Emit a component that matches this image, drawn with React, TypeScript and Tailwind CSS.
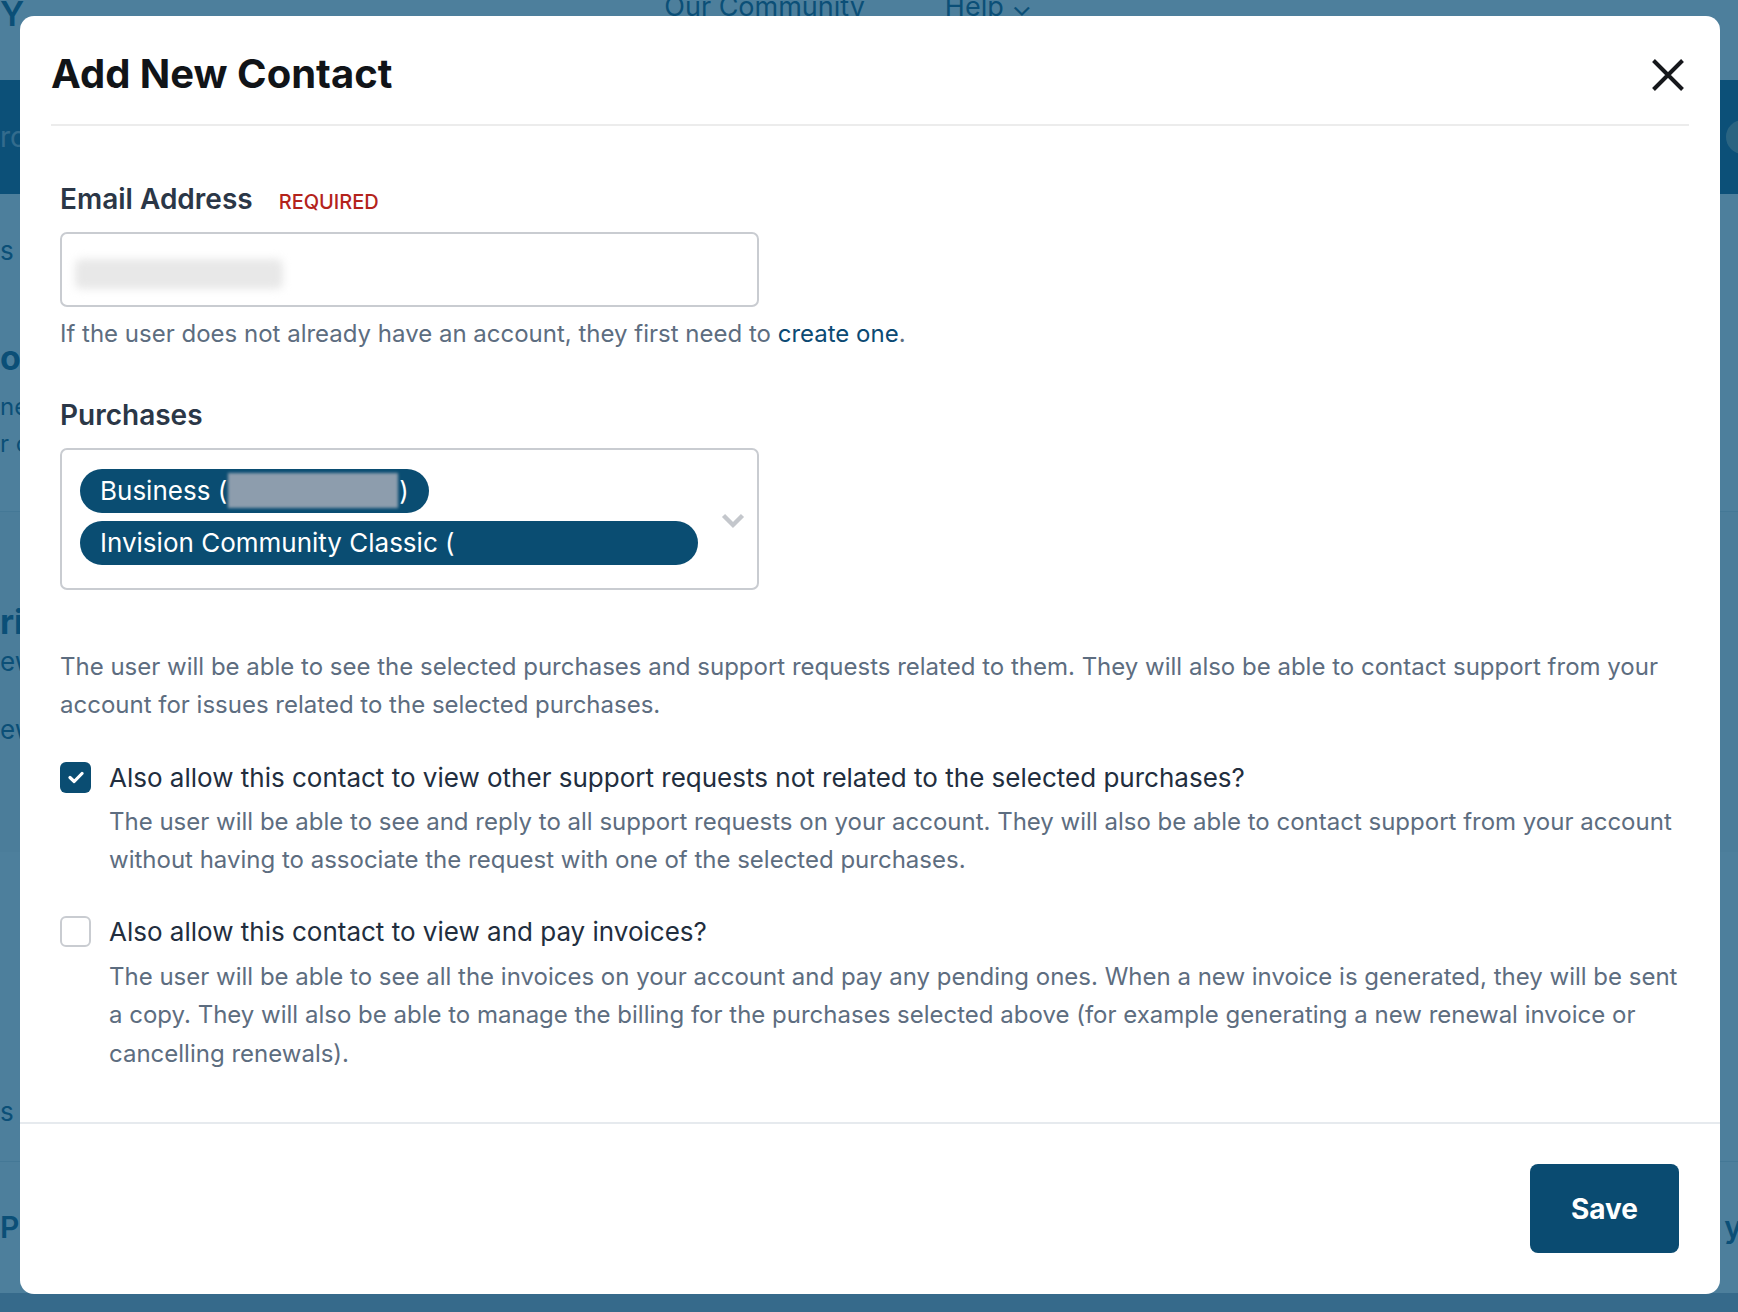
import React from "react";

function CloseIcon() {
  return (
    <svg width="34" height="34" viewBox="0 0 34 34" fill="none" aria-hidden="true">
      <path d="M2.5 2.5L31.5 31.5M31.5 2.5L2.5 31.5" stroke="#16181c" strokeWidth="4" strokeLinecap="butt" />
    </svg>
  );
}

function ChevronDown() {
  return (
    <svg width="24" height="17" viewBox="0 0 24 17" fill="none" aria-hidden="true">
      <path d="M2.5 3.5L12 13L21.5 3.5" stroke="#c4c7cc" strokeWidth="4.4" />
    </svg>
  );
}

function CheckIcon() {
  return (
    <svg width="16" height="13" viewBox="0 0 16 13" fill="none" aria-hidden="true">
      <path d="M2 6.5L6.2 10.5L14 2.5" stroke="#ffffff" strokeWidth="3.2" strokeLinecap="round" strokeLinejoin="round" />
    </svg>
  );
}

function Backdrop() {
  return (
    <div className="flex flex-col">
      {/* top navigation */}
      <div className="flex h-[80px] items-start bg-white">
        <span className="-mt-[6px] text-[34px] font-semibold leading-[40px] text-[#0b4f77]">Y</span>
        <nav className="-mt-[10px] ml-[640px] flex gap-[80px] text-[27px] leading-[34px] text-[#0b4f77]">
          <span>Our Community</span>
          <span>Help ⌄</span>
        </nav>
      </div>
      {/* hero band */}
      <div className="flex h-[114px] items-center justify-between bg-[#12527b]">
        <span className="text-[28px] leading-[34px] text-white/60">ro</span>
        <span className="mr-[-22px] h-[34px] w-[34px] rounded-full bg-[#7f9a9c]" />
      </div>
      {/* page content */}
      <div className="flex flex-col text-[#0b4f77]">
        <div className="h-[118px] pt-[42px] text-[26px] leading-[30px]">s</div>
        <div className="h-[200px] border-b border-[#dfe5ea] pt-[26px]">
          <div className="text-[34px] font-bold leading-[40px]">ou</div>
          <div className="mt-[10px] text-[24px] leading-[38px]">ne</div>
          <div className="text-[24px] leading-[36px]">r c</div>
        </div>
        <div className="h-[340px] bg-[#f6f7f8] pt-[90px]">
          <div className="text-[34px] font-bold leading-[40px]">ric</div>
          <div className="text-[26px] leading-[40px]">ew</div>
          <div className="mt-[28px] text-[26px] leading-[40px]">ew</div>
        </div>
        <div className="h-[310px] border-b border-[#dfe5ea] pt-[245px] text-[26px] leading-[30px]">s</div>
        <div className="flex h-[131px] items-center justify-between">
          <span className="text-[30px] font-semibold">PS</span>
          <span className="mr-[-4px] text-[30px] font-semibold">y</span>
        </div>
        <div className="h-[40px] bg-[#aab0c1]" />
      </div>
    </div>
  );
}

function ContactModal() {
  return (
    <div className="absolute left-[20px] top-[16px] w-[1700px] overflow-hidden rounded-[14px] bg-white">
      {/* header */}
      <div className="mx-[31px] flex items-center justify-between border-b-2 border-[#ececec] pb-[26px] pt-[34px]">
        <h2 className="text-[40px] font-bold leading-[48px] text-[#111418]">Add New Contact</h2>
        <button type="button" className="mr-[4px] mt-[2px]">
          <CloseIcon />
        </button>
      </div>

      {/* body */}
      <div className="flex flex-col px-[40px] pb-[49px] pt-[56px]">
        <div className="flex items-baseline gap-[26px]">
          <span className="text-[28px] font-semibold leading-[34px] text-[#2b3747]">Email Address</span>
          <span className="text-[20px] font-medium uppercase leading-[34px] text-[#b4231b]">Required</span>
        </div>
        <div className="mt-[13px] flex h-[75px] w-[699px] items-center rounded-[7px] border-2 border-[#c9ccd1] pl-[13px]">
          <div className="mt-[8px] h-[30px] w-[208px] rounded-[6px] bg-[#e8e8e8] blur-[4px]" />
        </div>
        <p className="mt-[8px] text-[24px] leading-[38.5px] text-[#5d6d80]">
          If the user does not already have an account, they first need to{" "}
          <a className="text-[#0b4a73]">create one</a>.
        </p>

        <div className="mt-[44px] text-[28px] font-semibold leading-[34px] text-[#2b3747]">Purchases</div>
        <div className="mt-[16px] flex h-[142px] w-[699px] items-center rounded-[7px] border-2 border-[#c9ccd1] pl-[18px] pr-[12px]">
          <div className="flex flex-1 flex-col items-start gap-[8px] pb-[4px]">
            <span className="flex h-[44px] items-center rounded-full bg-[#0a4d72] px-[20px] text-[26px] leading-[32px] text-white">
              Business (
              <span className="mx-[1px] inline-block h-[35px] w-[170px] bg-[#8d9dad] blur-[1.5px]" />)
            </span>
            <span className="flex h-[44px] w-[618px] items-center rounded-full bg-[#0a4d72] px-[20px] text-[26px] leading-[32px] text-white">
              Invision Community Classic (
            </span>
          </div>
          <span className="mt-[3px]">
            <ChevronDown />
          </span>
        </div>

        <p className="mt-[58px] text-[24px] leading-[38.5px] text-[#5d6d80]">
          The user will be able to see the selected purchases and support requests related to them. They will also be able
          to contact support from your account for issues related to the selected purchases.
        </p>

        <div className="mt-[37px] flex items-start gap-[18px]">
          <span className="flex h-[31px] w-[31px] shrink-0 items-center justify-center rounded-[6px] bg-[#0a4d72]">
            <CheckIcon />
          </span>
          <div className="-mr-[8px] flex flex-col">
            <span className="text-[26px] leading-[32px] text-[#222e3e]">
              Also allow this contact to view other support requests not related to the selected purchases?
            </span>
            <p className="mt-[9px] text-[24px] leading-[38.5px] text-[#5d6d80]">
              The user will be able to see and reply to all support requests on your account. They will also be able to
              contact support from your account without having to associate the request with one of the selected
              purchases.
            </p>
          </div>
        </div>

        <div className="mt-[36px] flex items-start gap-[18px]">
          <span className="h-[31px] w-[31px] shrink-0 rounded-[6px] border-2 border-[#c9ccd1] bg-white" />
          <div className="-mr-[8px] flex flex-col">
            <span className="text-[26px] leading-[32px] text-[#222e3e]">Also allow this contact to view and pay invoices?</span>
            <p className="mt-[10px] text-[24px] leading-[38.5px] text-[#5d6d80]">
              The user will be able to see all the invoices on your account and pay any pending ones. When a new invoice is
              generated, they will be sent a copy. They will also be able to manage the billing for the purchases selected
              above (for example generating a new renewal invoice or cancelling renewals).
            </p>
          </div>
        </div>
      </div>

      {/* footer */}
      <div className="flex justify-end border-t-2 border-[#e6eaee] px-[41px] pb-[41px] pt-[40px]">
        <button
          type="button"
          className="flex h-[89px] w-[149px] items-center justify-center rounded-[8px] bg-[#0a4b71] text-[28px] font-bold text-white"
        >
          Save
        </button>
      </div>
    </div>
  );
}

export default function App() {
  return (
    <div className="relative h-[1312px] w-[1738px] overflow-hidden bg-white font-[family-name:Inter,sans-serif]">
      <Backdrop />
      <div className="absolute inset-0 bg-[rgba(11,79,119,0.73)]" />
      <ContactModal />
    </div>
  );
}
